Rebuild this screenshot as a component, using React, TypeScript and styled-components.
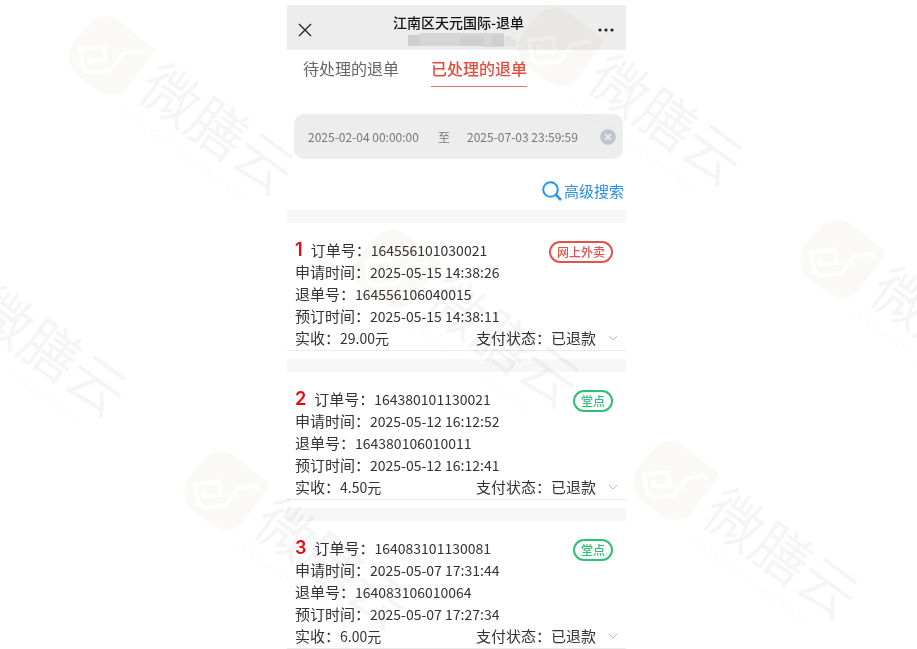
import React, { useState } from "react";
import styled, { createGlobalStyle } from "styled-components";

const GlobalStyle = createGlobalStyle`
  * { box-sizing: border-box; }
  body {
    margin: 0;
    background: #fff;
    color: #333;
    font-family: "Noto Sans CJK SC", sans-serif;
  }
  button, input {
    margin: 0;
    padding: 0;
    border: 0;
    background: none;
    color: inherit;
    font: inherit;
  }
  button { cursor: pointer; }
  svg { display: block; }
`;

const Page = styled.div`
  position: relative;
  display: grid;
  grid-template-columns: 287fr 339fr 291fr;
  min-height: 100vh;
  padding-top: 5px;
  overflow: hidden;
`;

const Phone = styled.main`
  grid-column: 2;
  min-width: 0;
`;

const Header = styled.header`
  display: grid;
  grid-template-columns: 32px 1fr 24px;
  align-items: center;
  height: 45px;
  padding: 0 8px 0 2px;
  background: #ededed;
`;

const HeaderButton = styled.button`
  display: grid;
  place-items: center;
  height: 32px;
  margin-top: 4px;
  color: #222;
`;

const TitleBlock = styled.div`
  display: flex;
  flex-direction: column;
  align-items: center;
  align-self: start;
  padding: 7px 0 0 2px;
`;

const Title = styled.h1`
  margin: 0;
  color: #111;
  font-size: 14px;
  font-weight: 500;
  line-height: 20px;
  white-space: nowrap;
`;

const Redaction = styled.svg`
  margin: 1px 0 0 6px;
`;

const Tabs = styled.nav`
  display: flex;
  gap: 32px;
  padding: 0 16px;
`;

const Tab = styled.button<{ $active: boolean }>`
  height: 37px;
  border-bottom: 1px solid ${(p) => (p.$active ? "#df756e" : "transparent")};
  color: ${(p) => (p.$active ? "#e64b40" : "#666")};
  font-size: 16px;
  font-weight: ${(p) => (p.$active ? 500 : 400)};
  line-height: 36px;
  white-space: nowrap;
`;

const DateRange = styled.div`
  display: flex;
  align-items: center;
  height: 45px;
  margin: 27px 3px 0 7px;
  padding: 0 7px 0 14px;
  border-radius: 10px;
  background: #ededed;
  color: #777;
  font-size: 12px;
`;

const DateInput = styled.input`
  width: 120px;
  min-width: 0;
  height: 24px;
`;

const Until = styled.span`
  margin: 0 17px 0 10px;
`;

const ClearButton = styled.button`
  margin-left: auto;
`;

const SearchRow = styled.div`
  display: flex;
  justify-content: flex-end;
  height: 51px;
  padding: 20px 2px 0 0;
`;

const SearchButton = styled.button`
  display: flex;
  align-items: center;
  gap: 2px;
  height: 24px;
  color: #2a8fe0;
  font-size: 15px;
  line-height: 22px;
  white-space: nowrap;
`;

const Band = styled.div`
  height: 13px;
  background: #f7f7f7;
`;

const Card = styled.article`
  & + & {
    margin-top: 8px;
    border-top: 13px solid #f7f7f7;
  }
`;

const CardBody = styled.div`
  display: grid;
  grid-template-columns: 1fr auto;
  grid-auto-rows: 22px;
  padding: 16px 8px 1px;
  border-bottom: 1px solid #ebebeb;
`;

const Line = styled.div`
  display: flex;
  align-items: center;
  grid-column: 1;
  font-size: 15px;
  line-height: 22px;
  white-space: nowrap;
`;

const Index = styled.strong`
  margin-right: 8px;
  color: #e60a12;
  font-family: Inter, sans-serif;
  font-size: 18px;
  font-weight: 600;
`;

const Value = styled.span`
  font-size: 14px;
`;

const Badge = styled.span<{ $tone: string }>`
  grid-column: 2;
  grid-row: 1 / span 2;
  height: 22px;
  margin: 2px 5px 0 0;
  padding: 0 6px;
  border: 2px solid ${(p) => p.$tone};
  border-radius: 11px;
  color: ${(p) => p.$tone};
  font-size: 12px;
  font-weight: 500;
  line-height: 18px;
  white-space: nowrap;
`;

const Footer = styled(Line)`
  grid-column: 1 / -1;
`;

const Status = styled.span`
  margin-left: auto;
`;

const ExpandButton = styled.button`
  display: grid;
  place-items: center;
  width: 10px;
  height: 20px;
  margin-left: 12px;
`;

const WatermarkLayer = styled.div`
  position: absolute;
  inset: 0;
  overflow: hidden;
  pointer-events: none;
  mix-blend-mode: multiply;
`;

const Mark = styled.svg<{ $x: number; $y: number }>`
  position: absolute;
  left: ${(p) => p.$x}px;
  top: ${(p) => p.$y}px;
  overflow: visible;
`;

const RED = "#e2544b";
const GREEN = "#2fc173";

const orders = [
  { order: "164556101030021", applied: "2025-05-15 14:38:26", refund: "164556106040015", booked: "2025-05-15 14:38:11", paid: "29.00", kind: "网上外卖", tone: RED },
  { order: "164380101130021", applied: "2025-05-12 16:12:52", refund: "164380106010011", booked: "2025-05-12 16:12:41", paid: "4.50", kind: "堂点", tone: GREEN },
  { order: "164083101130081", applied: "2025-05-07 17:31:44", refund: "164083106010064", booked: "2025-05-07 17:27:34", paid: "6.00", kind: "堂点", tone: GREEN },
];

const marks = [
  [60, 10], [509, 1], [-107, 232], [346, 223], [791, 213], [175, 445], [624, 435],
];

function BrandMark({ x, y }: { x: number; y: number }) {
  return (
    <Mark $x={x} $y={y} width="250" height="210" viewBox="0 0 750 630" aria-hidden="true">
      <path d="M286 118L180 34Q138 4 96 33L44 92Q11 142 44 192L112 241Q160 270 200 238Z" fill="#faf9f5" />
      <path d="M86 136L89 155L138 150L132 110L60 117L71 176L90 188L150 182L190 130L242 121L250 134" fill="none" stroke="#fff" strokeWidth="12" />
      <g transform="translate(226 250) rotate(36)" fontFamily='"Noto Sans CJK SC", sans-serif'>
        <text x="4" y="4" fontSize="172" fontWeight="300" fill="#f5f5f5" stroke="#f5f5f5" strokeWidth="3">微膳云</text>
        <text x="-4" y="74" fontSize="31" fill="#fcfcfc" fontFamily="Lato, sans-serif">INTELLIGENT CLOUD SERVICES</text>
      </g>
    </Mark>
  );
}

export default function App() {
  const [tab, setTab] = useState(1);
  const [from, setFrom] = useState("2025-02-04 00:00:00");
  const [to, setTo] = useState("2025-07-03 23:59:59");

  return (
    <Page>
      <GlobalStyle />
      <Phone>
        <Header>
          <HeaderButton aria-label="关闭">
            <svg width="14" height="14" viewBox="0 0 14 14" fill="none" stroke="currentColor" strokeWidth="1.3">
              <path d="M1 1L13 13M13 1L1 13" />
            </svg>
          </HeaderButton>
          <TitleBlock>
            <Title>江南区天元国际-退单</Title>
            <Redaction width="108" height="15" viewBox="0 0 108 15" aria-hidden="true">
              <path d="M0 2H12V0H96V3H103V6H108V14H76V13H0Z" fill="#d6d6d6" />
              <path d="M0 2H12V13H0ZM52 3H76V13H52ZM84 2H96V13H84Z" fill="#cfcfcf" />
              <path d="M96 3H103V6H108V14H96Z" fill="#e3e3e3" />
            </Redaction>
          </TitleBlock>
          <HeaderButton aria-label="更多">
            <svg width="16" height="4" viewBox="0 0 16 4" fill="currentColor">
              <circle cx="2" cy="2" r="1.6" />
              <circle cx="8" cy="2" r="1.6" />
              <circle cx="14" cy="2" r="1.6" />
            </svg>
          </HeaderButton>
        </Header>
        <Tabs>
          {["待处理的退单", "已处理的退单"].map((name, i) => (
            <Tab key={name} $active={tab === i} aria-pressed={tab === i} onClick={() => setTab(i)}>{name}</Tab>
          ))}
        </Tabs>
        <DateRange>
          <DateInput aria-label="开始时间" value={from} onChange={(e) => setFrom(e.target.value)} />
          <Until>至</Until>
          <DateInput aria-label="结束时间" value={to} onChange={(e) => setTo(e.target.value)} />
          <ClearButton aria-label="清除" onClick={() => { setFrom(""); setTo(""); }}>
            <svg width="16" height="16" viewBox="0 0 16 16">
              <circle cx="8" cy="8" r="7.8" fill="#c0c4cb" />
              <path d="M5 5L11 11M11 5L5 11" stroke="#f3f3f3" strokeWidth="1.4" />
            </svg>
          </ClearButton>
        </DateRange>
        <SearchRow>
          <SearchButton>
            <svg width="20" height="20" viewBox="0 0 20 20" fill="none" stroke="#2196f3" strokeWidth="2">
              <circle cx="8.5" cy="8.5" r="7.3" />
              <path d="M13.7 13.7L19 19" strokeWidth="2.6" />
            </svg>
            高级搜索
          </SearchButton>
        </SearchRow>
        <Band />
        {orders.map((o, i) => (
          <Card key={o.order}>
            <CardBody>
              <Line><Index>{i + 1}</Index>订单号：<Value>{o.order}</Value></Line>
              <Badge $tone={o.tone}>{o.kind}</Badge>
              <Line>申请时间：<Value>{o.applied}</Value></Line>
              <Line>退单号：<Value>{o.refund}</Value></Line>
              <Line>预订时间：<Value>{o.booked}</Value></Line>
              <Footer>
                实收：<Value>{o.paid}元</Value>
                <Status>支付状态：已退款</Status>
                <ExpandButton aria-label="展开">
                  <svg width="10" height="6" viewBox="0 0 10 6" fill="none" stroke="#bbb">
                    <path d="M1 1L5 5L9 1" />
                  </svg>
                </ExpandButton>
              </Footer>
            </CardBody>
          </Card>
        ))}
      </Phone>
      <WatermarkLayer>
        {marks.map(([x, y]) => <BrandMark key={`${x}-${y}`} x={x} y={y} />)}
      </WatermarkLayer>
    </Page>
  );
}
